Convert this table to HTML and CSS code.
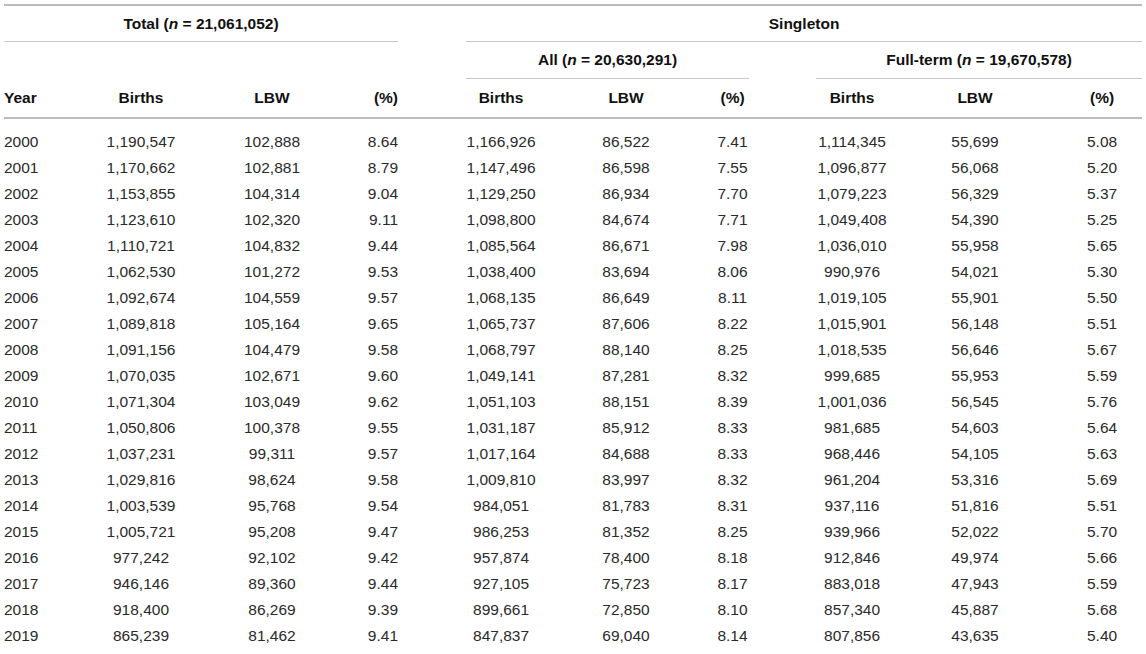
FILE: index.html
```html
<!DOCTYPE html>
<html lang="en">
<head>
    <meta charset="UTF-8">
    <title>Low birth weight by year</title>
    <link rel="stylesheet" href="styles.css">
</head>
<body>
    <div id="wrap">
        <table class="lbw">
            <colgroup>
                <col class="c-year">
                <col class="c-b1">
                <col class="c-l1">
                <col class="c-p1">
                <col class="c-gap1">
                <col class="c-b2">
                <col class="c-l2">
                <col class="c-p2">
                <col class="c-gap2">
                <col class="c-b3">
                <col class="c-l3">
                <col class="c-p3">
            </colgroup>
            <thead>
                <tr class="h1">
                    <th colspan="4" class="group">Total (<i>n</i> = 21,061,052)</th>
                    <th></th>
                    <th colspan="7" class="group">Singleton</th>
                </tr>
                <tr class="h2">
                    <th colspan="5"></th>
                    <th colspan="3" class="group">All (<i>n</i> = 20,630,291)</th>
                    <th></th>
                    <th colspan="3" class="group">Full-term (<i>n</i> = 19,670,578)</th>
                </tr>
                <tr class="h3">
                    <th class="year">Year</th>
                    <th>Births</th>
                    <th>LBW</th>
                    <th class="pct1">(%)</th>
                    <th></th>
                    <th>Births</th>
                    <th>LBW</th>
                    <th>(%)</th>
                    <th></th>
                    <th>Births</th>
                    <th>LBW</th>
                    <th>(%)</th>
                </tr>
            </thead>
            <tbody id="rows"></tbody>
        </table>
    </div>

    <script>
        var data = [
            ['2000', '1,190,547', '102,888', '8.64', '1,166,926', '86,522', '7.41', '1,114,345', '55,699', '5.08'],
            ['2001', '1,170,662', '102,881', '8.79', '1,147,496', '86,598', '7.55', '1,096,877', '56,068', '5.20'],
            ['2002', '1,153,855', '104,314', '9.04', '1,129,250', '86,934', '7.70', '1,079,223', '56,329', '5.37'],
            ['2003', '1,123,610', '102,320', '9.11', '1,098,800', '84,674', '7.71', '1,049,408', '54,390', '5.25'],
            ['2004', '1,110,721', '104,832', '9.44', '1,085,564', '86,671', '7.98', '1,036,010', '55,958', '5.65'],
            ['2005', '1,062,530', '101,272', '9.53', '1,038,400', '83,694', '8.06', '990,976', '54,021', '5.30'],
            ['2006', '1,092,674', '104,559', '9.57', '1,068,135', '86,649', '8.11', '1,019,105', '55,901', '5.50'],
            ['2007', '1,089,818', '105,164', '9.65', '1,065,737', '87,606', '8.22', '1,015,901', '56,148', '5.51'],
            ['2008', '1,091,156', '104,479', '9.58', '1,068,797', '88,140', '8.25', '1,018,535', '56,646', '5.67'],
            ['2009', '1,070,035', '102,671', '9.60', '1,049,141', '87,281', '8.32', '999,685', '55,953', '5.59'],
            ['2010', '1,071,304', '103,049', '9.62', '1,051,103', '88,151', '8.39', '1,001,036', '56,545', '5.76'],
            ['2011', '1,050,806', '100,378', '9.55', '1,031,187', '85,912', '8.33', '981,685', '54,603', '5.64'],
            ['2012', '1,037,231', '99,311', '9.57', '1,017,164', '84,688', '8.33', '968,446', '54,105', '5.63'],
            ['2013', '1,029,816', '98,624', '9.58', '1,009,810', '83,997', '8.32', '961,204', '53,316', '5.69'],
            ['2014', '1,003,539', '95,768', '9.54', '984,051', '81,783', '8.31', '937,116', '51,816', '5.51'],
            ['2015', '1,005,721', '95,208', '9.47', '986,253', '81,352', '8.25', '939,966', '52,022', '5.70'],
            ['2016', '977,242', '92,102', '9.42', '957,874', '78,400', '8.18', '912,846', '49,974', '5.66'],
            ['2017', '946,146', '89,360', '9.44', '927,105', '75,723', '8.17', '883,018', '47,943', '5.59'],
            ['2018', '918,400', '86,269', '9.39', '899,661', '72,850', '8.10', '857,340', '45,887', '5.68'],
            ['2019', '865,239', '81,462', '9.41', '847,837', '69,040', '8.14', '807,856', '43,635', '5.40']
        ];

        var tbody = document.getElementById('rows');
        data.forEach(function (r) {
            var tr = document.createElement('tr');
            var cells = [r[0], r[1], r[2], r[3], '', r[4], r[5], r[6], '', r[7], r[8], r[9]];
            cells.forEach(function (v, i) {
                var td = document.createElement('td');
                td.textContent = v;
                if (i === 0) td.className = 'year';
                if (i === 3) td.className = 'pct1';
                tr.appendChild(td);
            });
            tbody.appendChild(tr);
        });
    </script>
</body>
</html>
```

FILE: styles.css
```css
body {
    margin: 0;
    background: #fff;
    font-family: "Liberation Sans", Arial, sans-serif;
    color: #222;
}
#wrap {
    padding: 4px 4px 0;
}
.lbw {
    width: 1138px;
    table-layout: fixed;
    border-collapse: separate;
    border-spacing: 0;
    border-top: 2px solid #bcbcbc;
    font-size: 15.5px;
}
.c-year { width: 70px; }
.c-b1 { width: 134px; }
.c-l1 { width: 128px; }
.c-p1 { width: 62px; }
.c-gap1 { width: 68px; }
.c-b2 { width: 70px; }
.c-l2 { width: 180px; }
.c-p2 { width: 33px; }
.c-gap2 { width: 67px; }
.c-b3 { width: 72px; }
.c-l3 { width: 174px; }
.c-p3 { width: 80px; }

th, td {
    padding: 0;
    text-align: center;
    white-space: nowrap;
}
th {
    font-weight: bold;
    color: #111;
}
th i {
    font-style: italic;
}
.year {
    text-align: left;
}
.pct1 {
    text-align: right;
}

.h1 th {
    height: 35px;
    border-bottom: 1px solid transparent;
}
.h2 th {
    height: 36px;
    border-bottom: 1px solid transparent;
}
.h1 th.group,
.h2 th.group {
    border-bottom-color: #c9c9c9;
}
.h3 th {
    height: 38px;
    border-bottom: 2px solid #bcbcbc;
}

td {
    height: 26px;
    color: #2a2a2a;
}
tbody tr:first-child td {
    height: 36px;
    padding-top: 10px;
    box-sizing: border-box;
}
```
